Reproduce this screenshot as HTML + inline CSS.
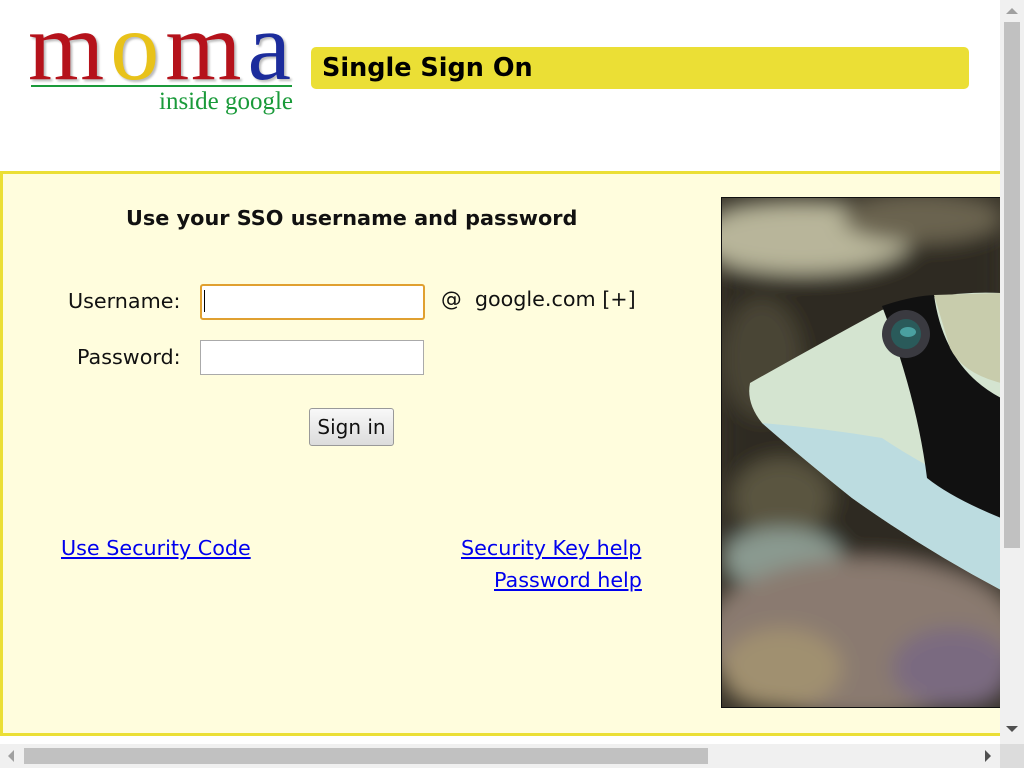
<!DOCTYPE html>
<html><head><meta charset="utf-8"><style>
html,body{margin:0;padding:0;width:1024px;height:768px;overflow:hidden;background:#fff;font-family:"DejaVu Sans","Liberation Sans",sans-serif;}
.a{position:absolute;}
a{color:#0000ee;text-decoration:underline;font-size:20.7px;}
.lbl{font-size:20.7px;color:#111;}
</style></head><body>
<!-- logo -->
<div class="a" style="left:28px;top:-2px;font-family:'Liberation Serif',serif;font-size:98px;line-height:98px;letter-spacing:6px;text-shadow:2px 2px 2px #bbb;white-space:nowrap;">
<span style="color:#b5121b">m</span><span style="color:#e8c21a">o</span><span style="color:#b5121b">m</span><span style="color:#1c2c9c">a</span></div>
<div class="a" style="left:31px;top:85px;width:261px;height:2px;background:#1a9a3a"></div>
<div class="a" style="left:159px;top:88px;font-family:'Liberation Serif',serif;font-size:25px;color:#1a9a3a;">inside google</div>
<!-- header bar -->
<div class="a" style="left:311px;top:47px;width:658px;height:42px;background:#ebdf35;border-radius:5px;"></div>
<div class="a" style="left:322px;top:53px;font-size:25.5px;font-weight:bold;color:#000;">Single Sign On</div>
<!-- main box -->
<div class="a" style="left:0;top:171px;width:1000px;height:559px;background:#fffddd;border-top:3px solid #ebdf35;border-bottom:3px solid #ebdf35;border-left:3px solid #ebdf35;"></div>
<div class="a" style="left:126px;top:206px;font-size:20.8px;font-weight:bold;color:#111;white-space:nowrap;">Use your SSO username and password</div>
<div class="a lbl" style="left:68px;top:289px;">Username:</div>
<div class="a lbl" style="left:77px;top:345px;">Password:</div>
<div class="a" style="left:200px;top:284px;width:221px;height:32px;background:#fff;border:2px solid #e0a030;border-radius:3px;"></div>
<div class="a" style="left:204px;top:290px;width:1px;height:22px;background:#000"></div>
<div class="a" style="left:200px;top:340px;width:222px;height:33px;background:#fff;border:1px solid #aaa;"></div>
<div class="a lbl" style="left:441px;top:287px;white-space:nowrap;">@&nbsp; google.com [+]</div>
<div class="a" style="left:309px;top:408px;width:83px;height:36px;background:linear-gradient(#f8f8f8,#dcdcdc);border:1px solid #999;border-radius:3px;font-size:20px;line-height:36px;text-align:center;color:#111;">Sign in</div>
<div class="a" style="left:61px;top:536px;white-space:nowrap;"><a>Use Security Code</a></div>
<div class="a" style="left:461px;top:536px;white-space:nowrap;"><a>Security Key help</a></div>
<div class="a" style="left:494px;top:568px;white-space:nowrap;"><a>Password help</a></div>
<!-- fish image -->
<div class="a" style="left:721px;top:197px;width:279px;height:509px;border:1px solid #111;border-right:none;overflow:hidden;background:#3a352a;">
<svg width="279" height="509" viewBox="0 0 279 509">
<defs><filter id="b"><feGaussianBlur stdDeviation="10"/></filter></defs>
<g filter="url(#b)">
<rect width="279" height="509" fill="#2e2a22"/>
<ellipse cx="80" cy="40" rx="110" ry="35" fill="#b8b59a"/>
<ellipse cx="200" cy="20" rx="80" ry="25" fill="#6a6450"/>
<ellipse cx="40" cy="160" rx="40" ry="60" fill="#4a4535"/>
<ellipse cx="60" cy="300" rx="50" ry="40" fill="#5a5540"/>
<ellipse cx="60" cy="360" rx="60" ry="30" fill="#8a9a90"/>
<ellipse cx="140" cy="440" rx="160" ry="80" fill="#8a7a70"/>
<ellipse cx="230" cy="470" rx="60" ry="40" fill="#7a6a80"/>
<ellipse cx="60" cy="470" rx="60" ry="40" fill="#a09070"/>
</g>
<path d="M28 185 Q90 150 160 112 Q220 92 279 95 L279 392 Q200 350 130 300 Q80 260 40 225 Q24 205 28 185Z" fill="#d4e4d0"/>
<path d="M40 225 Q100 230 160 240 Q220 280 279 300 L279 392 Q200 350 130 300 Q80 260 40 225Z" fill="#bcdce0"/>
<path d="M160 108 Q190 98 212 97 Q222 170 279 200 L279 320 Q230 300 205 280 Q195 200 160 108Z" fill="#111"/>
<path d="M212 97 L279 95 L279 185 Q240 175 228 150 Z" fill="#c8ccac"/>
<circle cx="184" cy="136" r="24" fill="#3a3a40"/>
<circle cx="184" cy="136" r="15" fill="#2a5a5a"/>
<ellipse cx="186" cy="134" rx="8" ry="5" fill="#4aa0a0"/>
</svg></div>
<!-- scrollbars -->
<div class="a" style="left:1000px;top:0;width:24px;height:768px;background:#f0f0f0;"></div>
<div class="a" style="left:1004px;top:22px;width:16px;height:526px;background:#c1c1c1;"></div>
<div class="a" style="left:1006px;top:8px;width:0;height:0;border-left:6px solid transparent;border-right:6px solid transparent;border-bottom:6px solid #a0a0a0;"></div>
<div class="a" style="left:1006px;top:726px;width:0;height:0;border-left:6px solid transparent;border-right:6px solid transparent;border-top:6px solid #505050;"></div>
<div class="a" style="left:0;top:744px;width:1000px;height:24px;background:#f0f0f0;"></div>
<div class="a" style="left:24px;top:748px;width:684px;height:16px;background:#c1c1c1;"></div>
<div class="a" style="left:8px;top:750px;width:0;height:0;border-top:6px solid transparent;border-bottom:6px solid transparent;border-right:6px solid #a0a0a0;"></div>
<div class="a" style="left:985px;top:750px;width:0;height:0;border-top:6px solid transparent;border-bottom:6px solid transparent;border-left:6px solid #505050;"></div>
<div class="a" style="left:1000px;top:744px;width:24px;height:24px;background:#dcdcdc;"></div>
</body></html>
